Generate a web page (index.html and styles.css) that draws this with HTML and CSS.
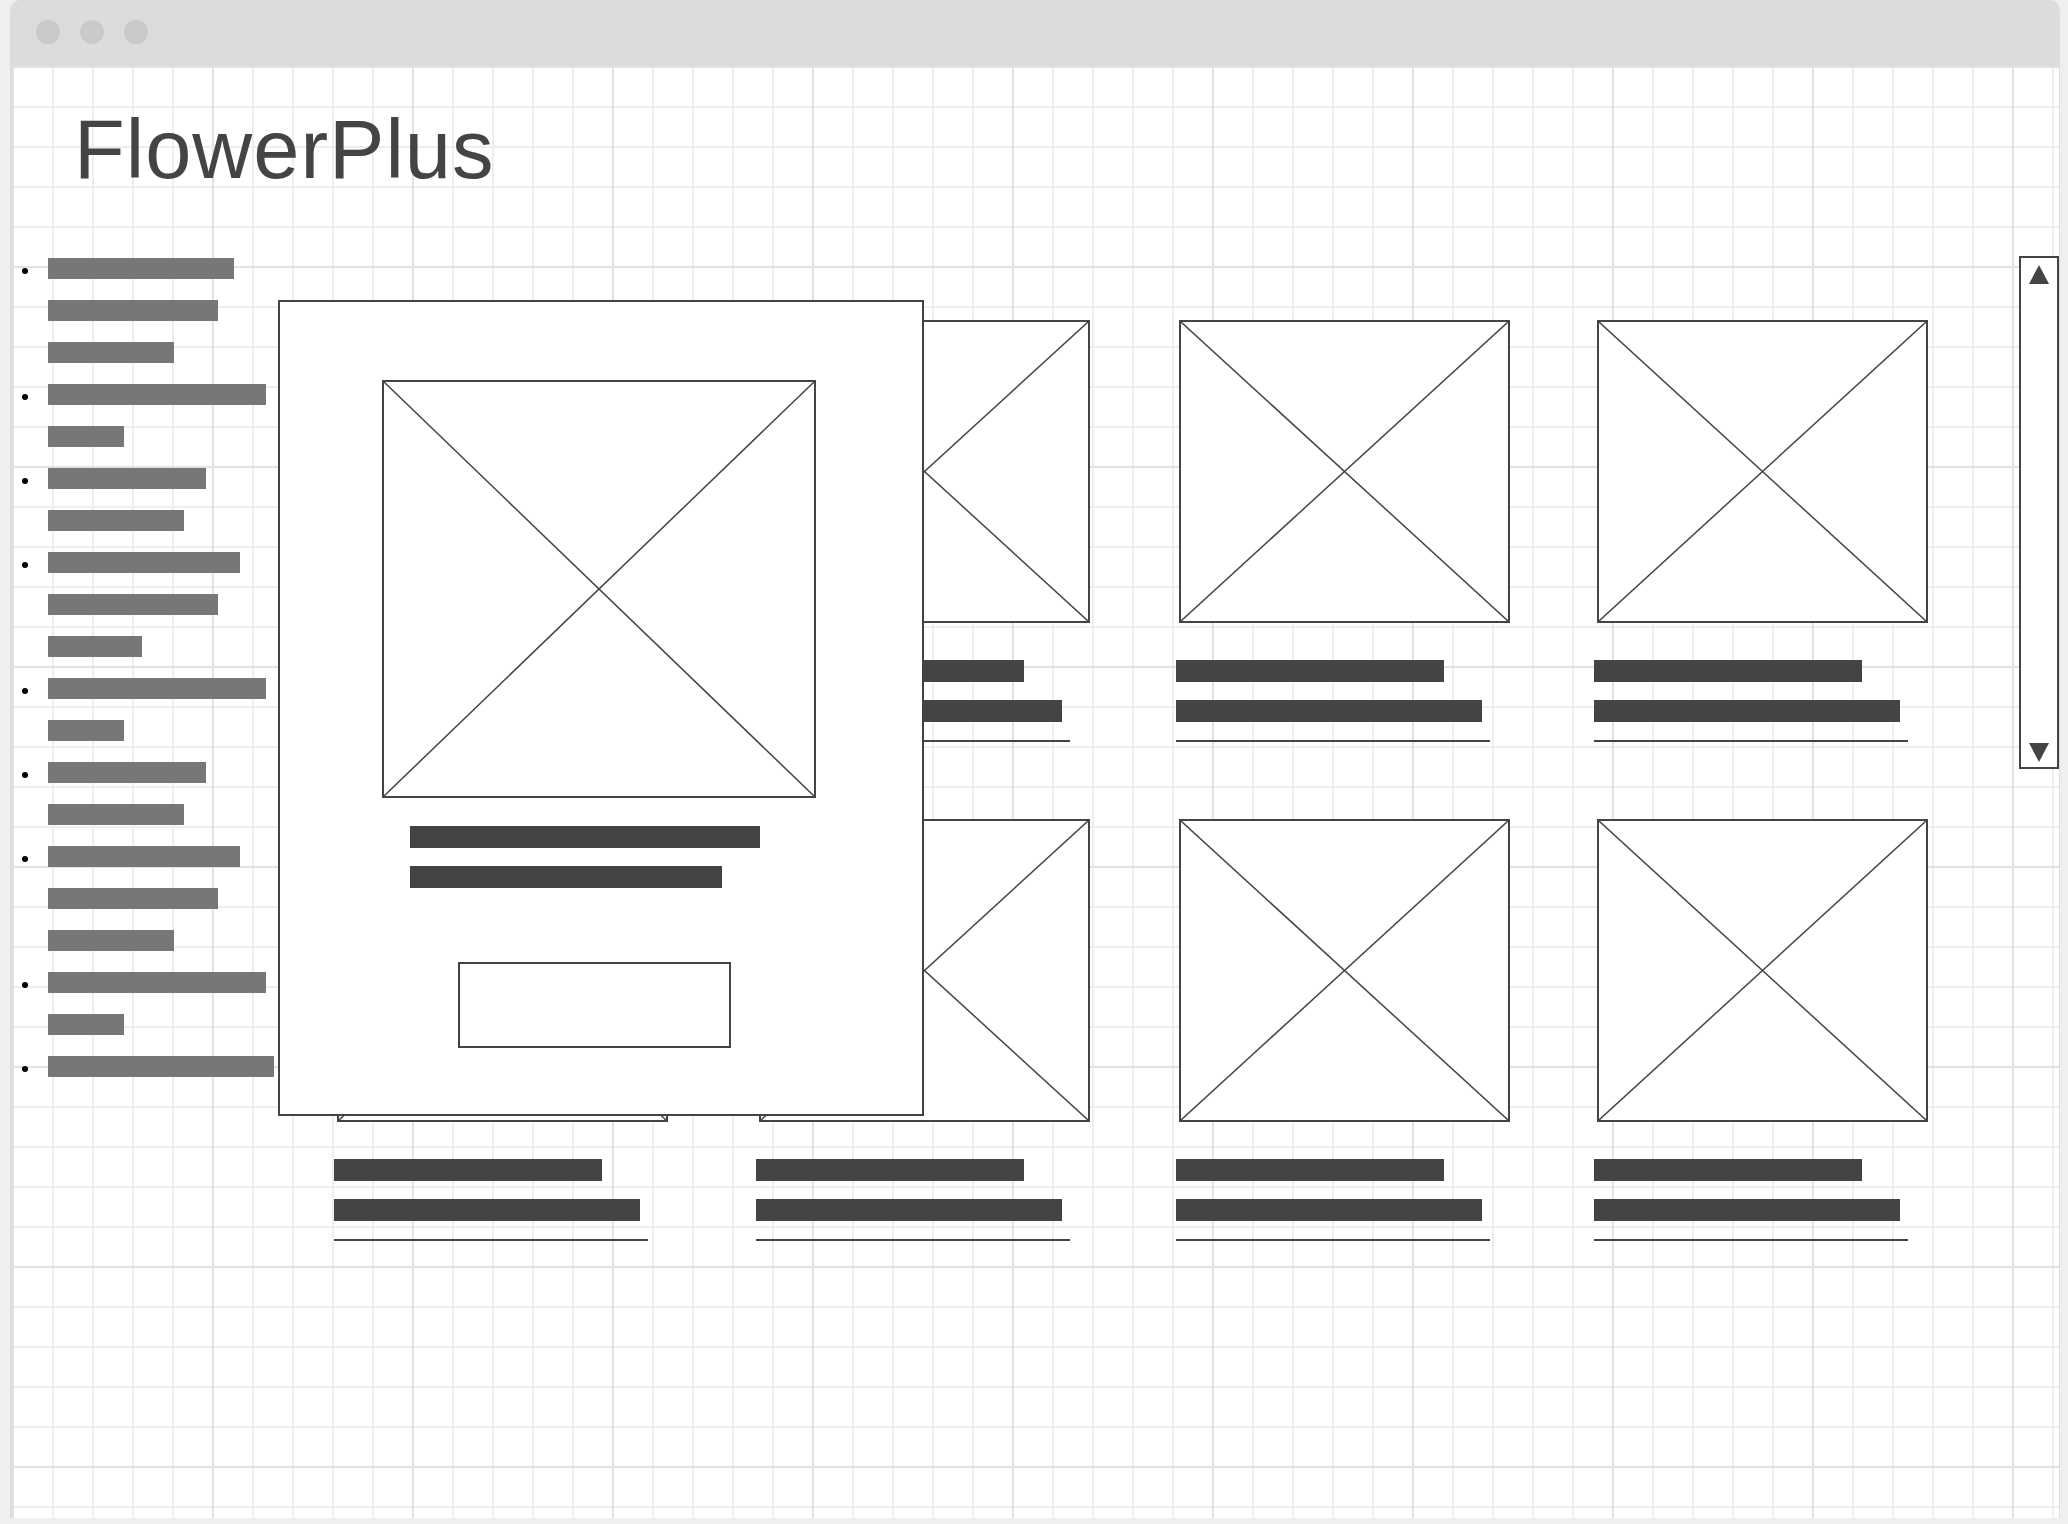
FILE: index.html
```html
<!DOCTYPE html>
<html>
<head>
<link rel="stylesheet" href="styles.css">
</head>
<body>

<div class="window">
  <div class="titlebar">
    <span class="dot"></span>
    <span class="dot"></span>
    <span class="dot"></span>
  </div>

  <div class="content">
    <h1 class="title">FlowerPlus</h1>

    <div class="main">
      <ul class="menu">
        <li><span class="bullet"></span><div class="lines"><span class="bar" style="width:186px"></span><span class="bar" style="width:170px"></span><span class="bar" style="width:126px"></span></div></li>
        <li><span class="bullet"></span><div class="lines"><span class="bar" style="width:218px"></span><span class="bar" style="width:76px"></span></div></li>
        <li><span class="bullet"></span><div class="lines"><span class="bar" style="width:158px"></span><span class="bar" style="width:136px"></span></div></li>
        <li><span class="bullet"></span><div class="lines"><span class="bar" style="width:192px"></span><span class="bar" style="width:170px"></span><span class="bar" style="width:94px"></span></div></li>
        <li><span class="bullet"></span><div class="lines"><span class="bar" style="width:218px"></span><span class="bar" style="width:76px"></span></div></li>
        <li><span class="bullet"></span><div class="lines"><span class="bar" style="width:158px"></span><span class="bar" style="width:136px"></span></div></li>
        <li><span class="bullet"></span><div class="lines"><span class="bar" style="width:192px"></span><span class="bar" style="width:170px"></span><span class="bar" style="width:126px"></span></div></li>
        <li><span class="bullet"></span><div class="lines"><span class="bar" style="width:218px"></span><span class="bar" style="width:76px"></span></div></li>
        <li><span class="bullet"></span><div class="lines"><span class="bar" style="width:226px"></span></div></li>
      </ul>

      <div class="grid">
        <div class="card">
          <div class="thumb"><svg viewBox="0 0 100 100" preserveAspectRatio="none"><line x1="0" y1="0" x2="100" y2="100"/><line x1="100" y1="0" x2="0" y2="100"/></svg></div>
          <div class="bar title-bar"></div>
          <div class="bar price-bar"></div>
          <div class="rule"></div>
        </div>
        <div class="card">
          <div class="thumb"><svg viewBox="0 0 100 100" preserveAspectRatio="none"><line x1="0" y1="0" x2="100" y2="100"/><line x1="100" y1="0" x2="0" y2="100"/></svg></div>
          <div class="bar title-bar"></div>
          <div class="bar price-bar"></div>
          <div class="rule"></div>
        </div>
        <div class="card">
          <div class="thumb"><svg viewBox="0 0 100 100" preserveAspectRatio="none"><line x1="0" y1="0" x2="100" y2="100"/><line x1="100" y1="0" x2="0" y2="100"/></svg></div>
          <div class="bar title-bar"></div>
          <div class="bar price-bar"></div>
          <div class="rule"></div>
        </div>
        <div class="card">
          <div class="thumb"><svg viewBox="0 0 100 100" preserveAspectRatio="none"><line x1="0" y1="0" x2="100" y2="100"/><line x1="100" y1="0" x2="0" y2="100"/></svg></div>
          <div class="bar title-bar"></div>
          <div class="bar price-bar"></div>
          <div class="rule"></div>
        </div>
        <div class="card">
          <div class="thumb"><svg viewBox="0 0 100 100" preserveAspectRatio="none"><line x1="0" y1="0" x2="100" y2="100"/><line x1="100" y1="0" x2="0" y2="100"/></svg></div>
          <div class="bar title-bar"></div>
          <div class="bar price-bar"></div>
          <div class="rule"></div>
        </div>
        <div class="card">
          <div class="thumb"><svg viewBox="0 0 100 100" preserveAspectRatio="none"><line x1="0" y1="0" x2="100" y2="100"/><line x1="100" y1="0" x2="0" y2="100"/></svg></div>
          <div class="bar title-bar"></div>
          <div class="bar price-bar"></div>
          <div class="rule"></div>
        </div>
        <div class="card">
          <div class="thumb"><svg viewBox="0 0 100 100" preserveAspectRatio="none"><line x1="0" y1="0" x2="100" y2="100"/><line x1="100" y1="0" x2="0" y2="100"/></svg></div>
          <div class="bar title-bar"></div>
          <div class="bar price-bar"></div>
          <div class="rule"></div>
        </div>
        <div class="card">
          <div class="thumb"><svg viewBox="0 0 100 100" preserveAspectRatio="none"><line x1="0" y1="0" x2="100" y2="100"/><line x1="100" y1="0" x2="0" y2="100"/></svg></div>
          <div class="bar title-bar"></div>
          <div class="bar price-bar"></div>
          <div class="rule"></div>
        </div>
      </div>

      <div class="scroll">
        <span class="arrow-up"></span>
        <span class="arrow-down"></span>
      </div>
    </div>

    <!-- product detail popup -->
    <div class="modal">
      <div class="thumb big"><svg viewBox="0 0 100 100" preserveAspectRatio="none"><line x1="0" y1="0" x2="100" y2="100"/><line x1="100" y1="0" x2="0" y2="100"/></svg></div>
      <div class="bar name-bar"></div>
      <div class="bar info-bar"></div>
      <div class="button"></div>
    </div>
  </div>
</div>

</body>
</html>
```

FILE: styles.css
```css
body {
  margin: 0;
  background: #efefef;
  font-family: "Liberation Sans", Arial, sans-serif;
}

.window {
  margin-left: 10px;
  width: 2050px;
  height: 1518px;
  background: #dcdcdc;
  border-radius: 10px 10px 0 0;
  display: flex;
  flex-direction: column;
}

.titlebar {
  height: 66px;
  flex-shrink: 0;
  display: flex;
  gap: 20px;
  padding: 20px 0 0 26px;
  box-sizing: border-box;
}

.dot {
  width: 24px;
  height: 24px;
  border-radius: 50%;
  background: #c9c9c9;
}

.content {
  flex: 1;
  margin: 0 1px 0 2px;
  position: relative;
  background-color: #fff;
  background-image:
    linear-gradient(90deg, #e2e2e2 2px, transparent 2px),
    linear-gradient(#e2e2e2 2px, transparent 2px),
    linear-gradient(90deg, #eeeeee 2px, transparent 2px),
    linear-gradient(#eeeeee 2px, transparent 2px);
  background-size: 200px 200px, 200px 200px, 40px 40px, 40px 40px;
}

.title {
  margin: 0;
  padding: 42px 0 0 62px;
  font-size: 83px;
  line-height: 83px;
  letter-spacing: 1px;
  font-weight: normal;
  color: #444;
}

.main {
  display: flex;
  align-items: flex-start;
  margin-top: 63px;
}

/* left category list */
.menu {
  list-style: none;
  margin: 0;
  padding: 4px 0 0;
  width: 262px;
  flex-shrink: 0;
  display: flex;
  flex-direction: column;
  gap: 21px;
}

.menu li {
  display: flex;
}

.bullet {
  width: 6px;
  height: 6px;
  border-radius: 50%;
  background: #000;
  margin: 10px 20px 0 10px;
  flex-shrink: 0;
}

.lines {
  display: flex;
  flex-direction: column;
  gap: 21px;
}

.menu .bar {
  display: block;
  height: 21px;
  background: #777;
}

/* product grid */
.grid {
  margin: 66px 0 0 60px;
  display: grid;
  grid-template-columns: 422px 420px 418px 336px;
  row-gap: 77px;
}

.thumb {
  margin-left: 2.5px;
  width: 331px;
  height: 303px;
  border: 2px solid #444;
  box-sizing: border-box;
  background: #fff;
}

.thumb svg {
  display: block;
  width: 100%;
  height: 100%;
}

.thumb line {
  stroke: #444;
  stroke-width: 1.5;
  vector-effect: non-scaling-stroke;
}

.bar {
  height: 22px;
  background: #444;
}

.title-bar {
  width: 268px;
  margin-top: 37px;
}

.price-bar {
  width: 306px;
  margin-top: 18px;
}

.rule {
  width: 314px;
  height: 2px;
  margin-top: 18px;
  background: #444;
}

/* scrollbar */
.scroll {
  margin: 2px 0 0 auto;
  width: 40px;
  height: 513px;
  border: 2px solid #444;
  box-sizing: border-box;
  background: #fff;
  display: flex;
  flex-direction: column;
  justify-content: space-between;
  align-items: center;
  padding: 7px 0 5px;
}

.arrow-up {
  width: 0;
  height: 0;
  border-left: 10px solid transparent;
  border-right: 10px solid transparent;
  border-bottom: 19px solid #444;
}

.arrow-down {
  width: 0;
  height: 0;
  border-left: 10px solid transparent;
  border-right: 10px solid transparent;
  border-top: 19px solid #444;
}

/* popup */
.modal {
  position: absolute;
  left: 266px;
  top: 234px;
  width: 646px;
  height: 816px;
  border: 2px solid #444;
  box-sizing: border-box;
  background: #fff;
  padding-top: 78px;
}

.modal .big {
  margin-left: 102px;
  width: 434px;
  height: 418px;
}

.name-bar {
  width: 350px;
  margin: 28px 0 0 130px;
}

.info-bar {
  width: 312px;
  margin: 18px 0 0 130px;
}

.button {
  width: 273px;
  height: 86px;
  margin: 74px 0 0 178px;
  border: 2px solid #444;
  box-sizing: border-box;
}
```
